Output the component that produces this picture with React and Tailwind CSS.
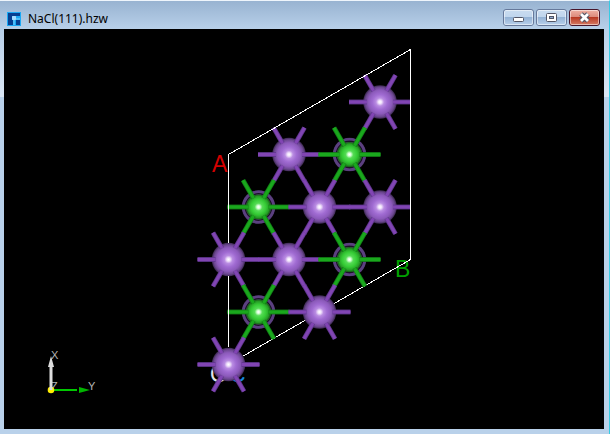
import React from "react";

const atoms = [
  { x: 380, y: 102, type: "na" },
  { x: 289, y: 154.5, type: "na" },
  { x: 349.5, y: 154.5, type: "cl" },
  { x: 258.5, y: 207, type: "cl" },
  { x: 319.5, y: 207, type: "na" },
  { x: 380, y: 207, type: "na" },
  { x: 228.5, y: 259.5, type: "na" },
  { x: 289, y: 259.5, type: "na" },
  { x: 349.5, y: 259.5, type: "cl" },
  { x: 258.5, y: 312, type: "cl" },
  { x: 319.5, y: 312, type: "na" },
  { x: 228.5, y: 364.5, type: "na" },
];

// Half-bond directions in the hexagonal plane, as unit vectors
const directions = [
  [1, 0],
  [0.5, 0.866],
  [-0.5, 0.866],
  [-1, 0],
  [-0.5, -0.866],
  [0.5, -0.866],
];

const palette = {
  na: { light: "#8145b3", dark: "#613790", start: 13 },
  cl: { light: "#1aa81d", dark: "#128216", start: 10 },
};

function Bonds({ x, y, type }) {
  const { light, dark, start } = palette[type];
  return directions.map(([dx, dy], idx) => {
    const line = {
      x1: x + dx * start,
      y1: y + dy * start,
      x2: x + dx * 31,
      y2: y + dy * 31,
    };
    return (
      <g key={idx}>
        <line {...line} stroke={dark} strokeWidth="4.8" />
        <line {...line} stroke={light} strokeWidth="3" />
      </g>
    );
  });
}

function Atom({ x, y, type }) {
  return (
    <g>
      <circle cx={x} cy={y} r="16.8" fill="url(#na)" />
      {type === "cl" && (
        <>
          <circle cx={x} cy={y} r="15.3" fill="none" stroke="#5b4080" strokeWidth="2.4" />
          <circle cx={x} cy={y} r="13.2" fill="none" stroke="#1a1226" strokeWidth="1.4" />
          <circle cx={x} cy={y} r="12.6" fill="url(#cl)" />
        </>
      )}
      <Bonds x={x} y={y} type={type} />
    </g>
  );
}

function Axes() {
  return (
    <g fontFamily="Liberation Sans, Arial, sans-serif" fontSize="11" fill="#b4b4b4">
      <text x="51" y="359">X</text>
      <text x="51" y="390">Z</text>
      <text x="88" y="390">Y</text>
      <path d="M51 390H77" stroke="#00c800" strokeWidth="2" />
      <path d="M79 387L90 390L79 393Z" fill="#00b400" />
      <circle cx="51" cy="390" r="3.3" fill="#ffee00" />
      <path d="M51 390V367" stroke="#dedede" strokeWidth="3" />
      <path d="M51 356L54 367H48Z" fill="#dedede" />
    </g>
  );
}

function Structure() {
  return (
    <svg className="absolute inset-0 size-full" viewBox="4 29 600 400" role="img" aria-label="NaCl(111) unit cell">
      <defs>
        <radialGradient id="na">
          <stop offset="0" stopColor="#ffffff" />
          <stop offset="0.1" stopColor="#f0e2fb" />
          <stop offset="0.24" stopColor="#b98ce2" />
          <stop offset="0.45" stopColor="#a06bd2" />
          <stop offset="0.7" stopColor="#8c5abb" />
          <stop offset="0.88" stopColor="#6a468e" />
          <stop offset="1" stopColor="#3a274e" />
        </radialGradient>
        <radialGradient id="cl">
          <stop offset="0" stopColor="#ffffff" />
          <stop offset="0.12" stopColor="#d8ffd8" />
          <stop offset="0.3" stopColor="#55dc55" />
          <stop offset="0.6" stopColor="#34cb34" />
          <stop offset="0.84" stopColor="#279c27" />
          <stop offset="1" stopColor="#145214" />
        </radialGradient>
      </defs>
      <g fontFamily="Liberation Sans, Arial, sans-serif" fontSize="23">
        <text x="212" y="172" fill="#d40000">A</text>
        <text x="395" y="277" fill="#00a000">B</text>
        <text x="210" y="382" fill="#e4e4e4">O</text>
        <text x="229" y="382" fill="#1586dd">C</text>
      </g>
      <path d="M228.5 364.5L410.5 259.5" stroke="#fff" shapeRendering="crispEdges" />
      {atoms.map((atom) => (
        <Atom key={`${atom.x}-${atom.y}`} {...atom} />
      ))}
      <g stroke="#fff" fill="none" shapeRendering="crispEdges">
        <path d="M228.5 243V154.5L410.5 49.5V259.5" />
        <path d="M228.5 276V347" />
      </g>
      <Axes />
    </svg>
  );
}

function WindowButton({ label, danger, children }) {
  const tone = danger
    ? "border-[#48162b] bg-linear-to-b from-[#efb0a3] from-0% via-[#dc8b7c] via-45% to-[#d17866]"
    : "border-[#66799b] bg-linear-to-b from-[#c9dcf0] to-[#b6cfea]";
  const shade = danger
    ? "bg-linear-to-b from-[#b6341d] to-[#d57a63]"
    : "bg-linear-to-b from-[#92b1d4] to-[#b8d0eb]";
  return (
    <button type="button" aria-label={label} className={`relative h-[17px] w-[31px] overflow-hidden rounded-[3px] border ${tone}`}>
      <span className={`absolute inset-x-0 bottom-0 h-2 ${shade}`} />
      <span className="absolute inset-0 rounded-xs border border-white/50" />
      <svg className="absolute inset-0 size-full" viewBox="0 0 29 15" fill="none">
        {children}
      </svg>
    </button>
  );
}

export default function App() {
  return (
    <div className="flex h-screen flex-col border-t border-r border-t-[#eef5fc] border-r-[#35cbe4] bg-[#b9d1ea]">
      <header className="flex h-7 shrink-0 items-start justify-between bg-linear-to-b from-[#98b3d1] to-[#b8d0e9] pr-[9px] pl-[7px]">
        <div className="flex items-center gap-[7px] pt-2">
          <svg className="size-[14px]" viewBox="0 0 14 14" aria-hidden="true">
            <rect width="14" height="14" fill="#1ba9f5" />
            <path d="M1 1H13V4H9V6H6V13H1Z" fill="#063f91" />
            <path d="M9 8H13V13H9Z" fill="#063f91" />
            <path d="M5 4H9V6H13V8H8V13H6V8H5Z" fill="#4dbdf8" />
            <rect x="5" y="4" width="4" height="4" rx="1" fill="#a5dcff" />
          </svg>
          <h1 className="font-['Noto_Sans',sans-serif] text-[12px] leading-5 text-black">NaCl(111).hzw</h1>
        </div>
        <div className="flex gap-0.5 pt-2">
          <WindowButton label="Minimize">
            <rect x="9.5" y="7.5" width="10" height="4" rx="1" fill="#fff" stroke="#535666" />
          </WindowButton>
          <WindowButton label="Maximize">
            <rect x="9.5" y="3.5" width="10" height="8" rx="1" fill="#fff" stroke="#535666" />
            <rect x="12.5" y="6.5" width="4" height="2" fill="#8eacd0" stroke="#535666" />
          </WindowButton>
          <WindowButton label="Close" danger>
            <path d="M11 4L18 11M18 4L11 11" stroke="#535666" strokeWidth="5" />
            <path d="M11 4L18 11M18 4L11 11" stroke="#fff" strokeWidth="2.8" />
          </WindowButton>
        </div>
      </header>
      <div className="flex min-h-0 flex-1 pb-[5px]">
        <div className="h-[68px] w-1 bg-linear-to-b from-[#b8d0e9] to-[#dbe7f5]" />
        <main className="relative flex-1 bg-black">
          <Structure />
        </main>
        <div className="h-[68px] w-[5px] bg-linear-to-b from-[#b8d0e9] to-[#dbe7f5]" />
      </div>
    </div>
  );
}
